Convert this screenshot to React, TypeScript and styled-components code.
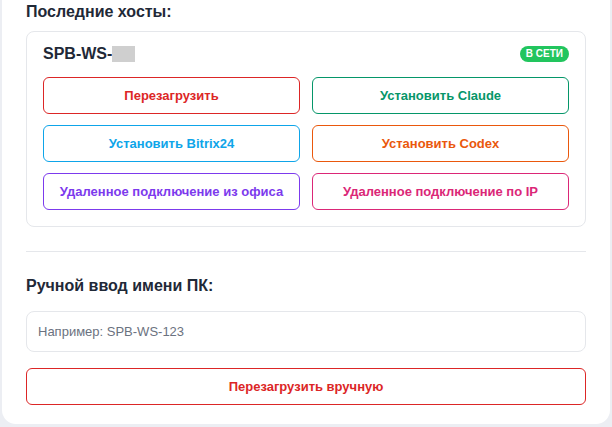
import React from "react";
import styled, { createGlobalStyle } from "styled-components";

const Global = createGlobalStyle`
  body { margin: 0; background: #eceef3; font-family: "Liberation Sans", Arial, sans-serif; }
`;
const Panel = styled.div`
  margin: 0 2px; background: #fff; border-radius: 0 0 14px 14px;
  padding: 2px 24px 21px; height: 424px; box-sizing: border-box;
`;
const H = styled.h3`
  margin: 0; font-size: 16px; font-weight: 700; color: #1f2937; line-height: 20px;
`;
const Card = styled.div`
  margin-top: 9px; border: 1px solid #e5e7eb; border-radius: 8px; padding: 13px 16px 16px;
`;
const CardHead = styled.div`
  display: flex; justify-content: space-between; align-items: center; margin-bottom: 14px;
`;
const Name = styled.div`
  font-size: 16px; font-weight: 700; color: #1f2937; display: flex; align-items: center;
`;
const Mask = styled.span`
  display: inline-block; width: 23px; height: 16px; background: #cfcfcf;
`;
const Badge = styled.span`
  background: #22c55e; color: #fff; font-size: 10px; font-weight: 700;
  padding: 2px 6px; border-radius: 8px; line-height: 12px;
`;
const Grid = styled.div`
  display: grid; grid-template-columns: 1fr 1fr; gap: 11px 12px;
`;
const Btn = styled.button<{ $c: string }>`
  height: 37px; background: #fff; border: 1px solid ${p => p.$c}; color: ${p => p.$c};
  border-radius: 6px; font-family: inherit; font-size: 13px; font-weight: 700; cursor: pointer;
`;
const Divider = styled.hr`
  border: 0; border-top: 1px solid #e5e7eb; margin: 24px 0 24px;
`;
const Input = styled.input`
  display: block; width: 100%; box-sizing: border-box; height: 41px; margin-top: 15px;
  border: 1px solid #e5e7eb; border-radius: 8px; padding: 0 11px; font-family: inherit; font-size: 13px;
  &::placeholder { color: #6b7280; }
`;
const Wide = styled(Btn)`
  width: 100%; margin-top: 16px;
`;

export default function App() {
  return (
    <>
      <Global />
      <Panel>
        <H>Последние хосты:</H>
        <Card>
          <CardHead>
            <Name>SPB-WS-<Mask /></Name>
            <Badge>В СЕТИ</Badge>
          </CardHead>
          <Grid>
            <Btn $c="#dc2626">Перезагрузить</Btn>
            <Btn $c="#059669">Установить Claude</Btn>
            <Btn $c="#0ea5e9">Установить Bitrix24</Btn>
            <Btn $c="#ea580c">Установить Codex</Btn>
            <Btn $c="#7c3aed">Удаленное подключение из офиса</Btn>
            <Btn $c="#db2777">Удаленное подключение по IP</Btn>
          </Grid>
        </Card>
        <Divider />
        <H>Ручной ввод имени ПК:</H>
        <Input placeholder="Например: SPB-WS-123" />
        <Wide $c="#dc2626">Перезагрузить вручную</Wide>
      </Panel>
    </>
  );
}
